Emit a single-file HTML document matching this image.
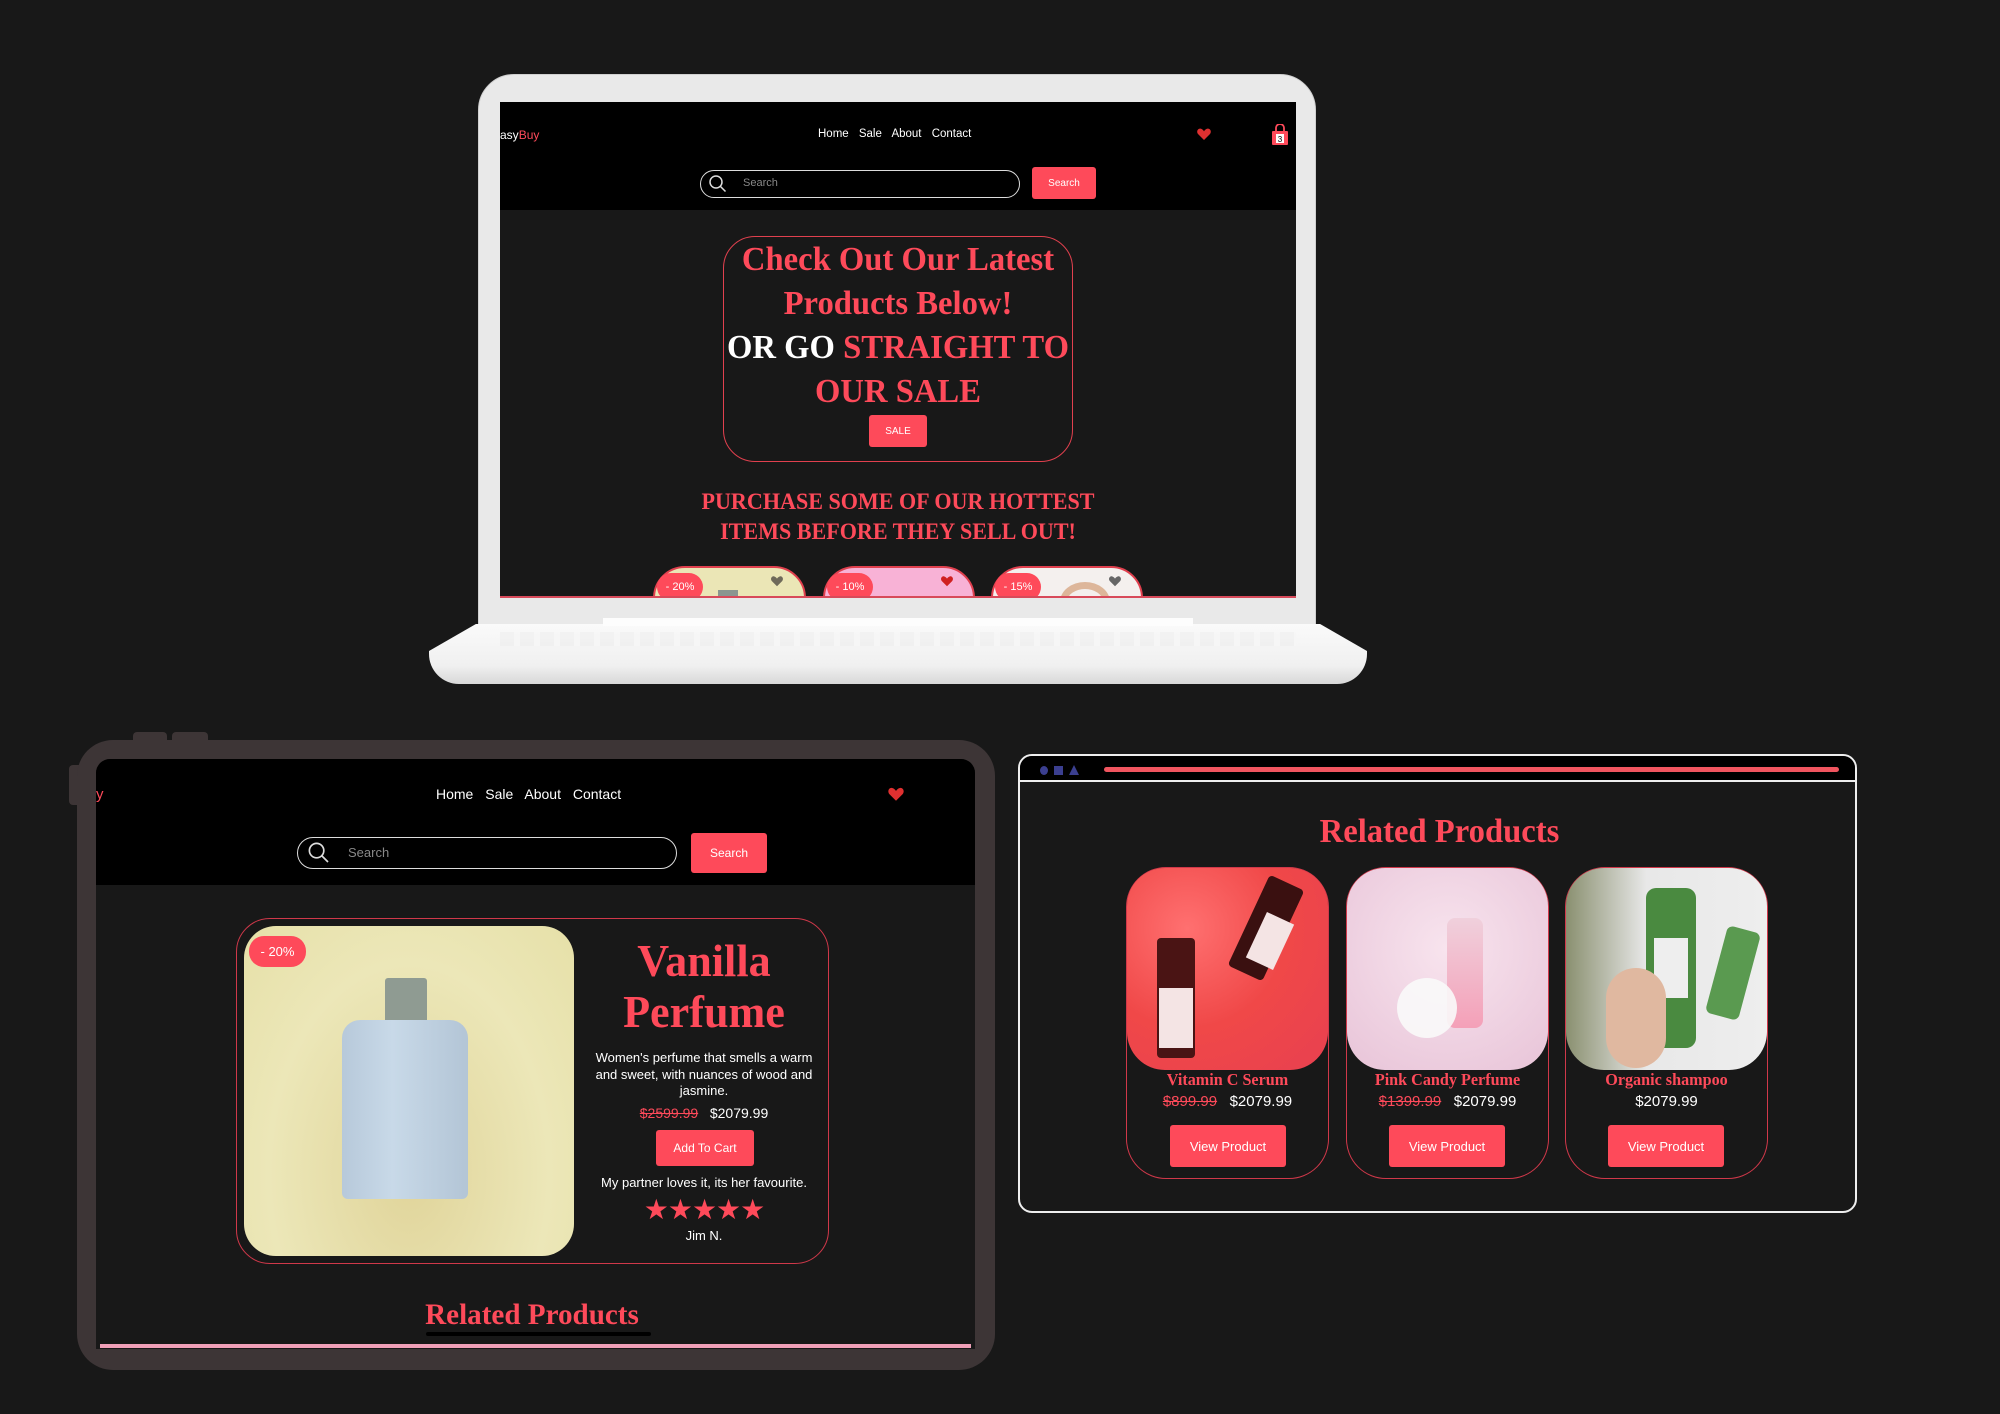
<!DOCTYPE html>
<html><head><meta charset="utf-8"><style>
*{margin:0;padding:0;box-sizing:border-box}
body{width:2000px;height:1414px;background:#181818;position:relative;overflow:hidden;font-family:"Liberation Sans",sans-serif}
.a{position:absolute}
.red{color:#fe4a5a}
.serif{font-family:"Liberation Serif",serif;font-weight:bold}
.cond{transform:scaleX(0.96);transform-origin:center}
.btn{position:absolute;background:#fe4a5a;color:#fff;display:flex;align-items:center;justify-content:center;border-radius:3px}
.c{text-align:center}
</style></head><body>

<!-- LAPTOP -->
<div class="a" style="left:478px;top:74px;width:838px;height:556px;background:#e9e9e9;border-radius:36px 36px 0 0;border:1px solid #d0d0d0"></div>
<div class="a" style="left:500px;top:102px;width:796px;height:496px;background:#181818;overflow:hidden;border-bottom:2px solid #d84a5a">
  <div class="a" style="left:0;top:0;width:796px;height:108px;background:#000"></div>
  <div class="a" style="left:0;top:26px;font-size:12px;color:#fff">asy<span class="red">Buy</span></div>
  <div class="a" style="left:318px;top:26px;font-size:11.5px;color:#fff;word-spacing:7px">Home Sale About Contact</div>
  <svg class="a" style="left:696px;top:24px" width="16" height="16" viewBox="0 0 24 24"><path d="M12 21L3 12C0 8 3 3 7 4c2 .5 4 2 5 4 1-2 3-3.5 5-4 4-1 7 4 4 8z" fill="#e03030"/></svg>
  <svg class="a" style="left:770px;top:22px" width="20" height="22" viewBox="0 0 20 22"><path d="M6 7V4a4 4 0 0 1 8 0v3" stroke="#fe4a5a" stroke-width="1.8" fill="none"/><rect x="2" y="7" width="16" height="14" rx="1" fill="#fe4a5a"/><rect x="6" y="10" width="8" height="9" fill="#fff"/><text x="10" y="18" font-size="8" text-anchor="middle" fill="#000">3</text></svg>
  <div class="a" style="left:200px;top:68px;width:320px;height:28px;border:1.5px solid #ddd;border-radius:14px"></div>
  <svg class="a" style="left:208px;top:72px" width="20" height="20" viewBox="0 0 20 20"><circle cx="8" cy="8" r="6" stroke="#ddd" stroke-width="1.5" fill="none"/><path d="M12.5 12.5l5 5" stroke="#ddd" stroke-width="1.5"/></svg>
  <div class="a" style="left:243px;top:75px;font-size:11px;color:#888">Search</div>
  <div class="btn" style="left:532px;top:65px;width:64px;height:32px;font-size:10px">Search</div>
  <div class="a" style="left:223px;top:134px;width:350px;height:226px;border:1.5px solid #e0404e;border-radius:32px"></div>
  <div class="a serif c red cond" style="left:150px;top:136px;width:496px;font-size:34px;line-height:44px">Check Out Our Latest<br>Products Below!<br><span style="color:#fff">OR GO</span> STRAIGHT TO<br>OUR SALE</div>
  <div class="btn" style="left:369px;top:313px;width:58px;height:32px;font-size:10px">SALE</div>
  <div class="a serif c red cond" style="left:100px;top:385px;width:596px;font-size:23px;line-height:30px">PURCHASE SOME OF OUR HOTTEST<br>ITEMS BEFORE THEY SELL OUT!</div>
  <div class="a" style="left:153px;top:464px;width:153px;height:60px;background:#ebe6b6;border:2px solid #e0404e;border-radius:32px 32px 0 0"></div>
  <div class="a" style="left:323px;top:464px;width:152px;height:60px;background:#f8b2d6;border:2px solid #e0404e;border-radius:32px 32px 0 0"></div>
  <div class="a" style="left:491px;top:464px;width:152px;height:60px;background:#f4f0ee;border:2px solid #e0404e;border-radius:32px 32px 0 0"></div>
  <div class="a" style="left:560px;top:480px;width:50px;height:40px;border:7px solid #ddb69a;border-radius:50%"></div>
  <div class="a" style="left:218px;top:488px;width:20px;height:12px;background:#8a9690"></div>
  <div class="btn" style="left:157px;top:471px;width:46px;height:28px;border-radius:14px;font-size:11px">- 20%</div>
  <div class="btn" style="left:327px;top:471px;width:46px;height:28px;border-radius:14px;font-size:11px">- 10%</div>
  <div class="btn" style="left:495px;top:471px;width:46px;height:28px;border-radius:14px;font-size:11px">- 15%</div>
  <svg class="a" style="left:270px;top:472px" width="14" height="14" viewBox="0 0 24 24"><path d="M12 21L3 12C0 8 3 3 7 4c2 .5 4 2 5 4 1-2 3-3.5 5-4 4-1 7 4 4 8z" fill="#6f6a5a"/></svg>
  <svg class="a" style="left:440px;top:472px" width="14" height="14" viewBox="0 0 24 24"><path d="M12 21L3 12C0 8 3 3 7 4c2 .5 4 2 5 4 1-2 3-3.5 5-4 4-1 7 4 4 8z" fill="#d02020"/></svg>
  <svg class="a" style="left:608px;top:472px" width="14" height="14" viewBox="0 0 24 24"><path d="M12 21L3 12C0 8 3 3 7 4c2 .5 4 2 5 4 1-2 3-3.5 5-4 4-1 7 4 4 8z" fill="#666"/></svg>
</div>
<div class="a" style="left:429px;top:624px;width:938px;height:60px;background:linear-gradient(#fafafa,#f0f0f0 70%,#d8d8d8);border-radius:6px 6px 30px 30px;clip-path:polygon(5% 0,95% 0,100% 45%,100% 100%,0 100%,0 45%)"></div>
<div class="a" style="left:603px;top:618px;width:590px;height:8px;background:#fdfdfd"></div>
<div class="a" style="left:500px;top:632px;width:796px;height:14px;background:repeating-linear-gradient(90deg,#ececec 0 14px,#f6f6f6 14px 20px);opacity:.5"></div>

<!-- TABLET -->
<div class="a" style="left:133px;top:732px;width:34px;height:14px;background:#3d3536;border-radius:4px"></div>
<div class="a" style="left:172px;top:732px;width:36px;height:14px;background:#3d3536;border-radius:4px"></div>
<div class="a" style="left:69px;top:765px;width:14px;height:40px;background:#3d3536;border-radius:4px"></div>
<div class="a" style="left:77px;top:740px;width:918px;height:630px;background:#3d3536;border-radius:36px"></div>
<div class="a" style="left:96px;top:759px;width:879px;height:590px;background:#181818;border-radius:14px 14px 0 0;overflow:hidden">
  <div class="a" style="left:0;top:0;width:879px;height:126px;background:#000"></div>
  <div class="a red" style="left:0;top:27px;font-size:15px">y</div>
  <div class="a" style="left:340px;top:27px;font-size:14px;color:#fff;word-spacing:8px">Home Sale About Contact</div>
  <svg class="a" style="left:791px;top:26px" width="18" height="18" viewBox="0 0 24 24"><path d="M12 21L3 12C0 8 3 3 7 4c2 .5 4 2 5 4 1-2 3-3.5 5-4 4-1 7 4 4 8z" fill="#e03030"/></svg>
  <div class="a" style="left:201px;top:78px;width:380px;height:32px;border:1.5px solid #ddd;border-radius:16px"></div>
  <svg class="a" style="left:211px;top:82px" width="24" height="24" viewBox="0 0 20 20"><circle cx="8" cy="8" r="6" stroke="#ddd" stroke-width="1.4" fill="none"/><path d="M12.5 12.5l5 5" stroke="#ddd" stroke-width="1.4"/></svg>
  <div class="a" style="left:252px;top:86px;font-size:13px;color:#888">Search</div>
  <div class="btn" style="left:595px;top:74px;width:76px;height:40px;font-size:12px">Search</div>
  <div class="a" style="left:140px;top:159px;width:593px;height:346px;border:1.5px solid #d0384a;border-radius:34px"></div>
  <div class="a" style="left:148px;top:167px;width:330px;height:330px;border-radius:32px;overflow:hidden;background:radial-gradient(ellipse at 50% 75%,#e0d49a,#ece7b8 60%,#e6e0a8)">
    <div class="a" style="left:141px;top:52px;width:42px;height:54px;background:#8f9b92;border-radius:3px"></div>
    <div class="a" style="left:98px;top:94px;width:126px;height:179px;background:linear-gradient(90deg,#b7c9da,#c8d9e8 40%,#b3c5d6);border-radius:18px 18px 6px 6px"></div>
  </div>
  <div class="btn" style="left:153px;top:177px;width:57px;height:31px;border-radius:15px;font-size:13px">- 20%</div>
  <div class="a serif c red cond" style="left:440px;top:176px;width:336px;font-size:46px;line-height:51px">Vanilla<br>Perfume</div>
  <div class="a c" style="left:494px;top:291px;width:228px;font-size:13px;line-height:16.5px;color:#fff">Women's perfume that smells a warm and sweet, with nuances of wood and jasmine.</div>
  <div class="a c" style="left:480px;top:346px;width:256px;font-size:14px;color:#fff"><s class="red">$2599.99</s>&nbsp;&nbsp;&nbsp;$2079.99</div>
  <div class="btn" style="left:560px;top:371px;width:98px;height:36px;font-size:12px">Add To Cart</div>
  <div class="a c" style="left:480px;top:416px;width:256px;font-size:13px;color:#fff">My partner loves it, its her favourite.</div>
  <div class="a c red" style="left:480px;top:434px;width:256px;font-size:28px;letter-spacing:-1px">★★★★★</div>
  <div class="a c" style="left:480px;top:469px;width:256px;font-size:13px;color:#fff">Jim N.</div>
  <div class="a serif c red" style="left:250px;top:539px;width:372px;font-size:30px;transform:scaleX(.97)">Related Products</div>
  <div class="a" style="left:330px;top:573px;width:225px;height:4px;background:#000;border-radius:2px"></div>
  <div class="a" style="left:4px;top:585px;width:871px;height:4px;background:#f0a0b8"></div>
</div>

<!-- BROWSER -->
<div class="a" style="left:1018px;top:754px;width:839px;height:459px;border:2px solid #eee;border-radius:14px;background:#181818;overflow:hidden">
  <div class="a" style="left:0;top:0;width:839px;height:26px;background:#000;border-bottom:2px solid #eee"></div>
  <div class="a" style="left:20px;top:10px;width:8px;height:9px;border-radius:50%;background:#3b3f90"></div>
  <div class="a" style="left:34px;top:10px;width:9px;height:9px;background:#3b3f90"></div>
  <div class="a" style="left:49px;top:9px;width:0;height:0;border-left:5px solid transparent;border-right:5px solid transparent;border-bottom:10px solid #3b3f90"></div>
  <div class="a" style="left:84px;top:11px;width:735px;height:5px;background:#f0555f;border-radius:3px"></div>
  <div class="a serif c red cond" style="left:0;top:57px;width:839px;font-size:34px">Related Products</div>
</div>
<div class="a" style="left:1126px;top:867px;width:203px;height:312px;border:1.5px solid #d0384a;border-radius:40px"></div>
<div class="a" style="left:1346px;top:867px;width:203px;height:312px;border:1.5px solid #d0384a;border-radius:40px"></div>
<div class="a" style="left:1565px;top:867px;width:203px;height:312px;border:1.5px solid #d0384a;border-radius:40px"></div>
<div class="a" style="left:1127px;top:868px;width:201px;height:202px;border-radius:38px;overflow:hidden;background:radial-gradient(circle at 30% 30%,#ff7070,#f04848 50%,#e84050)">
  <div class="a" style="left:120px;top:10px;width:38px;height:100px;background:#3a1010;transform:rotate(25deg);border-radius:4px"></div>
  <div class="a" style="left:30px;top:70px;width:38px;height:120px;background:#4a1414;border-radius:4px"></div>
  <div class="a" style="left:32px;top:120px;width:34px;height:60px;background:#f4e4e4"></div>
  <div class="a" style="left:128px;top:48px;width:30px;height:50px;background:#f4e4e4;transform:rotate(25deg)"></div>
</div>
<div class="a" style="left:1347px;top:868px;width:201px;height:202px;border-radius:38px;overflow:hidden;background:radial-gradient(circle at 50% 40%,#f8e4ee,#e8c4d8)">
  <div class="a" style="left:100px;top:50px;width:36px;height:110px;background:linear-gradient(#f0d0dc,#f4a0b8);border-radius:8px"></div>
  <div class="a" style="left:50px;top:110px;width:60px;height:60px;background:#fafafa;border-radius:50%;opacity:.9"></div>
</div>
<div class="a" style="left:1566px;top:868px;width:201px;height:202px;border-radius:38px;overflow:hidden;background:linear-gradient(90deg,#8a9070,#e8e8e8 40%,#eee)">
  <div class="a" style="left:80px;top:20px;width:50px;height:160px;background:#4a8a40;border-radius:10px"></div>
  <div class="a" style="left:88px;top:70px;width:34px;height:60px;background:#eee"></div>
  <div class="a" style="left:40px;top:100px;width:60px;height:100px;background:#e0b8a0;border-radius:30px"></div>
  <div class="a" style="left:150px;top:60px;width:34px;height:90px;background:#5a9a50;border-radius:6px;transform:rotate(15deg)"></div>
</div>
<div class="a serif c red" style="left:1106px;top:1070px;width:243px;font-size:17px;transform:scaleX(.95)">Vitamin C Serum</div>
<div class="a serif c red" style="left:1326px;top:1070px;width:243px;font-size:17px;transform:scaleX(.95)">Pink Candy Perfume</div>
<div class="a serif c red" style="left:1545px;top:1070px;width:243px;font-size:17px;transform:scaleX(.95)">Organic shampoo</div>
<div class="a c" style="left:1126px;top:1093px;width:203px;font-size:15px;color:#fff"><s class="red">$899.99</s>&nbsp;&nbsp;&nbsp;$2079.99</div>
<div class="a c" style="left:1346px;top:1093px;width:203px;font-size:15px;color:#fff"><s class="red">$1399.99</s>&nbsp;&nbsp;&nbsp;$2079.99</div>
<div class="a c" style="left:1565px;top:1093px;width:203px;font-size:15px;color:#fff">$2079.99</div>
<div class="btn" style="left:1170px;top:1125px;width:116px;height:42px;font-size:13px">View Product</div>
<div class="btn" style="left:1389px;top:1125px;width:116px;height:42px;font-size:13px">View Product</div>
<div class="btn" style="left:1608px;top:1125px;width:116px;height:42px;font-size:13px">View Product</div>
</body></html>
